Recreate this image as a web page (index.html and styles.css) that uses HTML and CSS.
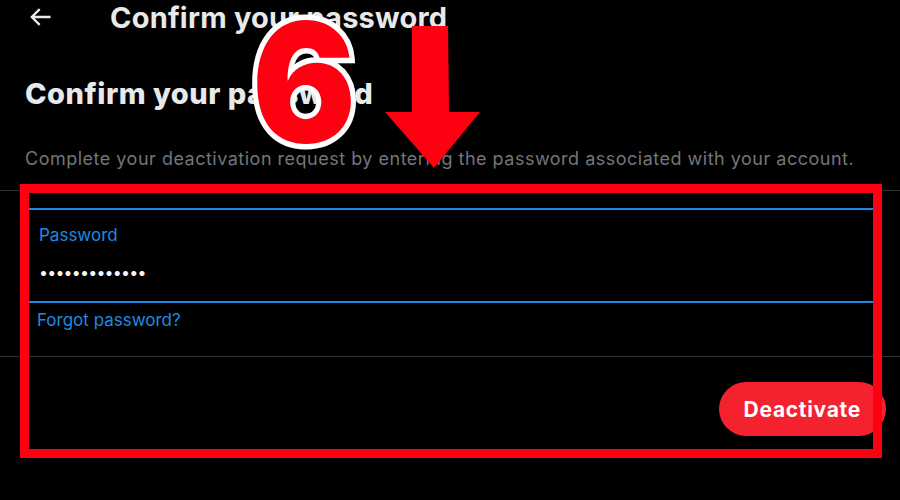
FILE: index.html
```html
<!DOCTYPE html>
<html>
<head>
<meta charset="utf-8">
<link rel="stylesheet" href="styles.css">
</head>
<body>
<div class="page">
  <header class="topbar">
    <svg class="back" viewBox="0 0 24 24" width="28" height="28"><path fill="#e7e9ea" d="M7.414 13l5.043 5.04-1.414 1.42L3.586 12l7.457-7.46 1.414 1.42L7.414 11H21v2H7.414z"/></svg>
    <h1 class="title">Confirm your password</h1>
  </header>
  <section class="intro">
    <h2 class="heading">Confirm your password</h2>
    <p class="desc">Complete your deactivation request by entering the password associated with your account.</p>
  </section>
  <div class="divider first"></div>
  <section class="form">
    <div class="field">
      <div class="label">Password</div>
      <div class="value">•••••••••••••</div>
    </div>
    <a class="forgot">Forgot password?</a>
  </section>
  <div class="divider second"></div>
  <div class="actions">
    <button class="deactivate">Deactivate</button>
  </div>

  <div class="highlight"></div>
  <span class="step">6</span>
  <svg class="pointer" viewBox="0 0 100 145" width="100" height="145"><polygon fill="#ff0010" points="27,0 63,0 64,86 95,86 49,142 0,86 27,86"/></svg>
</div>
</body>
</html>
```
FILE: styles.css
```css
html, body {
  margin: 0;
  padding: 0;
  background: #000;
}
body {
  width: 900px;
  height: 500px;
  overflow: hidden;
  font-family: "Inter", "Liberation Sans", sans-serif;
  color: #e7e9ea;
}
.page {
  position: relative;
  width: 900px;
  height: 500px;
}
.topbar {
  display: flex;
  align-items: center;
  height: 36px;
  padding-left: 26px;
}
.back {
  display: block;
  margin-top: -2px;
}
.title {
  margin: 0 0 0 56px;
  font-size: 29px;
  font-weight: 700;
  line-height: 34px;
  letter-spacing: 0.2px;
  color: #e7e9ea;
}
.intro {
  padding: 0 0 0 25px;
}
.heading {
  margin: 40px 0 0 0;
  font-size: 29px;
  font-weight: 800;
  line-height: 36px;
  letter-spacing: 0.5px;
}
.desc {
  margin: 35px 0 0 0;
  font-size: 18px;
  line-height: 24px;
  letter-spacing: 0.5px;
  color: #71767b;
  white-space: nowrap;
}
.divider {
  height: 1px;
  background: #2f3336;
}
.divider.first {
  margin-top: 19px;
}
.form {
  padding: 17px 19px 0 25px;
}
.field {
  border: 2px solid #1d8ce0;
  border-radius: 4px;
  height: 95px;
  box-sizing: border-box;
  padding: 14px 12px 0 12px;
}
.label {
  font-size: 17px;
  line-height: 22px;
  color: #1d8ce0;
}
.value {
  margin-top: 15px;
  font-size: 16px;
  line-height: 22px;
  letter-spacing: -0.8px;
  color: #f7f9f9;
}
.forgot {
  display: block;
  margin: 6px 0 0 12px;
  font-size: 17px;
  line-height: 22px;
  color: #1d8ce0;
}
.divider.second {
  margin-top: 25px;
}
.actions {
  display: flex;
  justify-content: flex-end;
  padding: 25px 14px 0 0;
}
.deactivate {
  height: 54px;
  padding: 0 25px;
  border: none;
  border-radius: 27px;
  background: #f4212e;
  color: #fff;
  font-family: "Inter", "Liberation Sans", sans-serif;
  font-size: 21px;
  font-weight: 700;
  letter-spacing: 0.7px;
}
.highlight {
  position: absolute;
  left: 20px;
  top: 184px;
  width: 862px;
  height: 274px;
  box-sizing: border-box;
  border: 9px solid #ff0010;
}
.step {
  position: absolute;
  left: 252px;
  top: 7px;
  font-family: "Inter", "Liberation Sans", sans-serif;
  font-size: 166px;
  font-weight: 900;
  line-height: 150px;
  color: #ff0010;
  -webkit-text-stroke: 11px #fff;
  paint-order: stroke fill;
  transform: scaleX(0.93);
  transform-origin: left top;
}
.pointer {
  position: absolute;
  left: 385px;
  top: 26px;
}
```
